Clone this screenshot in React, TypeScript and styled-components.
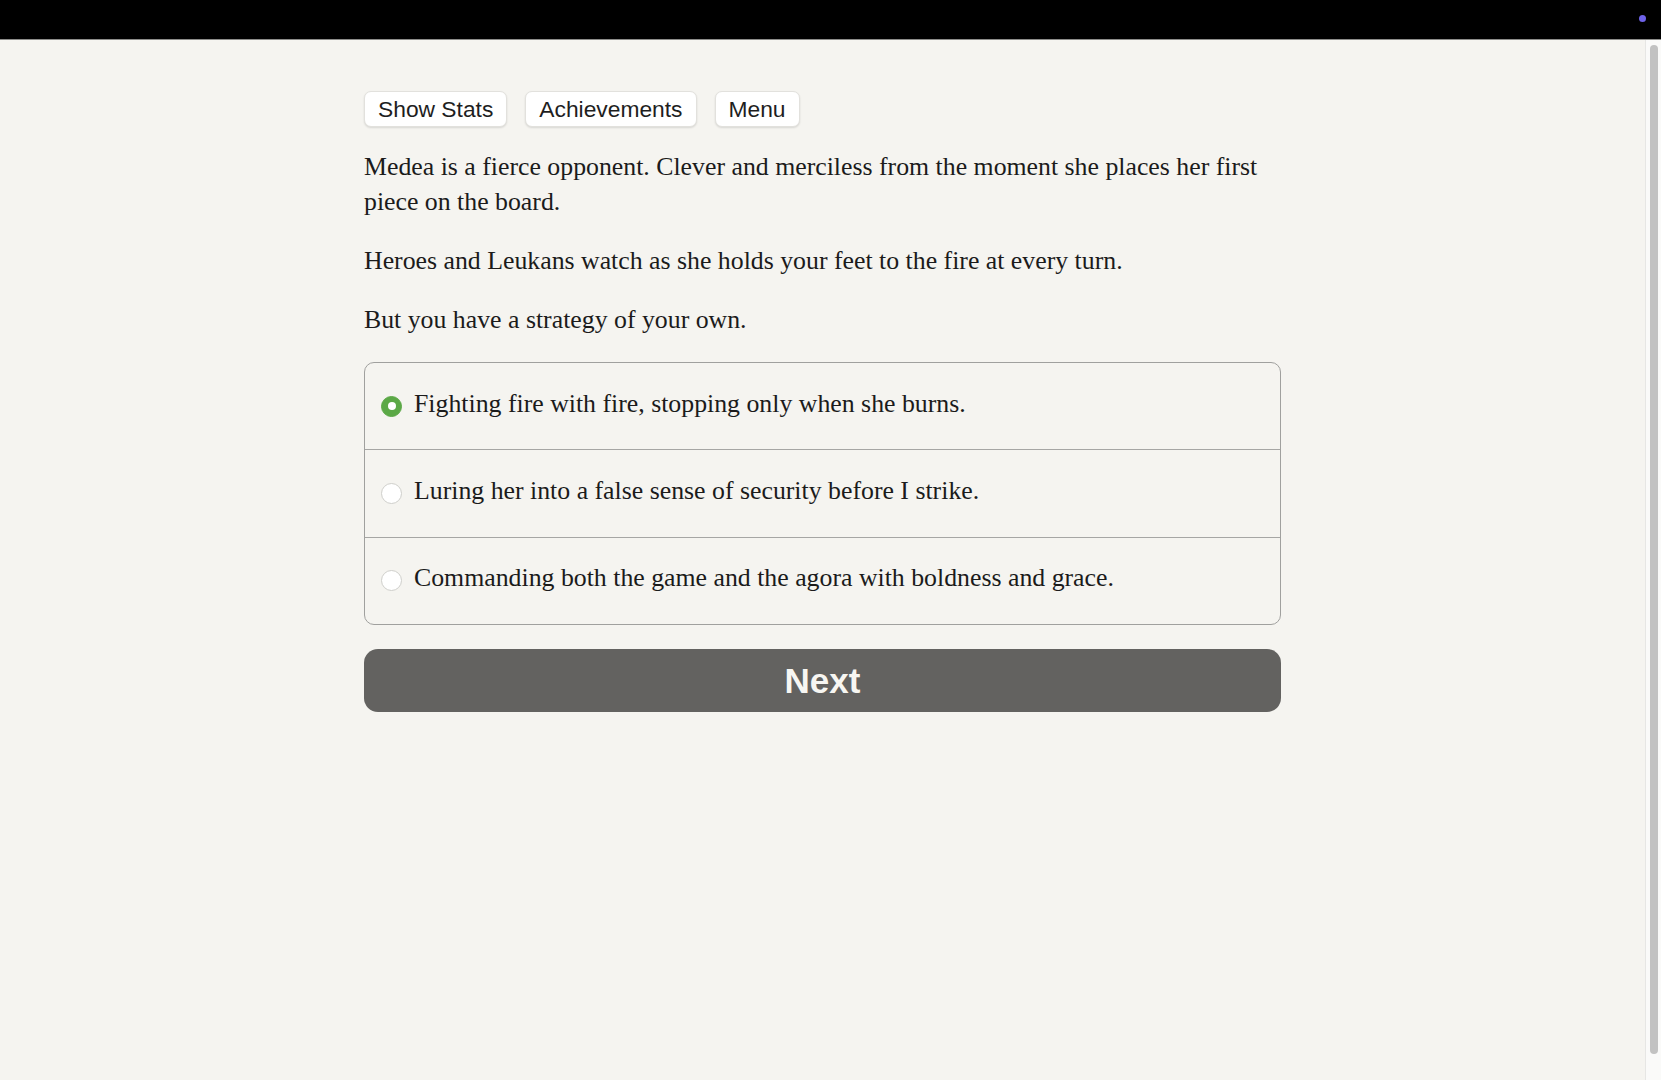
import React, { useState } from "react";
import styled, { createGlobalStyle } from "styled-components";

const GlobalStyle = createGlobalStyle`
  html, body {
    margin: 0;
    padding: 0;
    height: 100%;
    overflow: hidden;
    background: #f5f4f0;
  }
  #root {
    height: 100%;
  }
`;

const choices = [
  "Fighting fire with fire, stopping only when she burns.",
  "Luring her into a false sense of security before I strike.",
  "Commanding both the game and the agora with boldness and grace.",
];

const App: React.FC = () => {
  const [picked, setPicked] = useState(0);

  return (
    <>
      <GlobalStyle />
      <Shell>
        <TopBar>
          <StatusDot />
        </TopBar>
        <Body>
          <Scroller>
            <Page>
              <Toolbar>
                <ToolButton>Show Stats</ToolButton>
                <ToolButton>Achievements</ToolButton>
                <ToolButton>Menu</ToolButton>
              </Toolbar>

              <Story>
                <p>
                  Medea is a fierce opponent. Clever and merciless from the moment she
                  places her first piece on the board.
                </p>
                <p>Heroes and Leukans watch as she holds your feet to the fire at every turn.</p>
                <p>But you have a strategy of your own.</p>
              </Story>

              <ChoiceList>
                {choices.map((text, i) => (
                  <ChoiceRow key={text} onClick={() => setPicked(i)}>
                    <Radio checked={picked === i} />
                    <ChoiceText>{text}</ChoiceText>
                  </ChoiceRow>
                ))}
              </ChoiceList>

              <NextButton>Next</NextButton>
            </Page>
          </Scroller>
          {/* page scrollbar rail */}
          <ScrollRail>
            <ScrollThumb />
          </ScrollRail>
        </Body>
      </Shell>
    </>
  );
};

export default App;

const Shell = styled.div`
  height: 100vh;
  display: flex;
  flex-direction: column;
`;

const TopBar = styled.div`
  height: 40px;
  flex-shrink: 0;
  background: #000;
  border-bottom: 1px solid #8c8c8a;
  box-sizing: border-box;
  display: flex;
  justify-content: flex-end;
  align-items: flex-start;
  padding: 15px 15px 0 0;
`;

const StatusDot = styled.span`
  width: 7px;
  height: 7px;
  border-radius: 50%;
  background: #6e62e8;
`;

const Body = styled.div`
  flex: 1;
  min-height: 0;
  display: flex;
`;

const Scroller = styled.div`
  flex: 1;
  overflow: hidden;
  background: #f5f4f0;
`;

const ScrollRail = styled.div`
  width: 16px;
  flex-shrink: 0;
  box-sizing: border-box;
  background: #fafaf9;
  border-left: 1px solid #e6e6e4;
  padding: 5px 3px 26px 4px;
  display: flex;
`;

const ScrollThumb = styled.div`
  flex: 1;
  background: #c2c2c2;
  border-radius: 4px;
`;

const Page = styled.div`
  max-width: 917px;
  margin: 0 auto;
  padding-top: 51px;
`;

const Toolbar = styled.div`
  display: flex;
  gap: 18px;
`;

const ToolButton = styled.button`
  height: 36px;
  padding: 0 13px;
  background: #fff;
  border: 1px solid #e2e1dd;
  border-radius: 7px;
  box-shadow: 0 1px 2px rgba(0, 0, 0, 0.12);
  font-family: "Liberation Sans", Arial, sans-serif;
  font-size: 22.8px;
  color: #1e1e1e;
  cursor: pointer;
`;

const Story = styled.div`
  margin-top: 22px;
  font-family: "Liberation Serif", "Times New Roman", serif;
  font-size: 25.8px;
  line-height: 35px;
  color: #1b1b1b;

  p {
    margin: 0 0 24px;
  }
  p:last-child {
    margin-bottom: 0;
  }
`;

const ChoiceList = styled.div`
  margin-top: 25px;
  border: 1.5px solid #a0a09e;
  border-radius: 10px;
  overflow: hidden;
`;

const ChoiceRow = styled.label`
  display: flex;
  align-items: center;
  gap: 12px;
  height: 86px;
  padding: 0 16px;
  box-sizing: border-box;
  cursor: pointer;

  & + & {
    border-top: 1.5px solid #a6a6a4;
    height: 87.5px;
  }
`;

const Radio = styled.span<{ checked: boolean }>`
  width: 21px;
  height: 21px;
  flex-shrink: 0;
  border-radius: 50%;
  box-sizing: border-box;
  background: ${(p) => (p.checked ? "#5ba846" : "#fff")};
  border: 1px solid ${(p) => (p.checked ? "#5ba846" : "#cfcfcb")};
  display: flex;
  align-items: center;
  justify-content: center;

  &::after {
    content: "";
    width: 8px;
    height: 8px;
    border-radius: 50%;
    background: #fff;
    display: ${(p) => (p.checked ? "block" : "none")};
  }
`;

const ChoiceText = styled.span`
  font-family: "Liberation Serif", "Times New Roman", serif;
  font-size: 25.8px;
  line-height: 35px;
  color: #1b1b1b;
  margin-top: -6px;
`;

const NextButton = styled.button`
  display: block;
  width: 100%;
  height: 63px;
  margin-top: 24px;
  background: #636260;
  border: none;
  border-radius: 14px;
  font-family: "Liberation Sans", Arial, sans-serif;
  font-weight: 700;
  font-size: 35px;
  color: #f7f6f2;
  cursor: pointer;
`;
